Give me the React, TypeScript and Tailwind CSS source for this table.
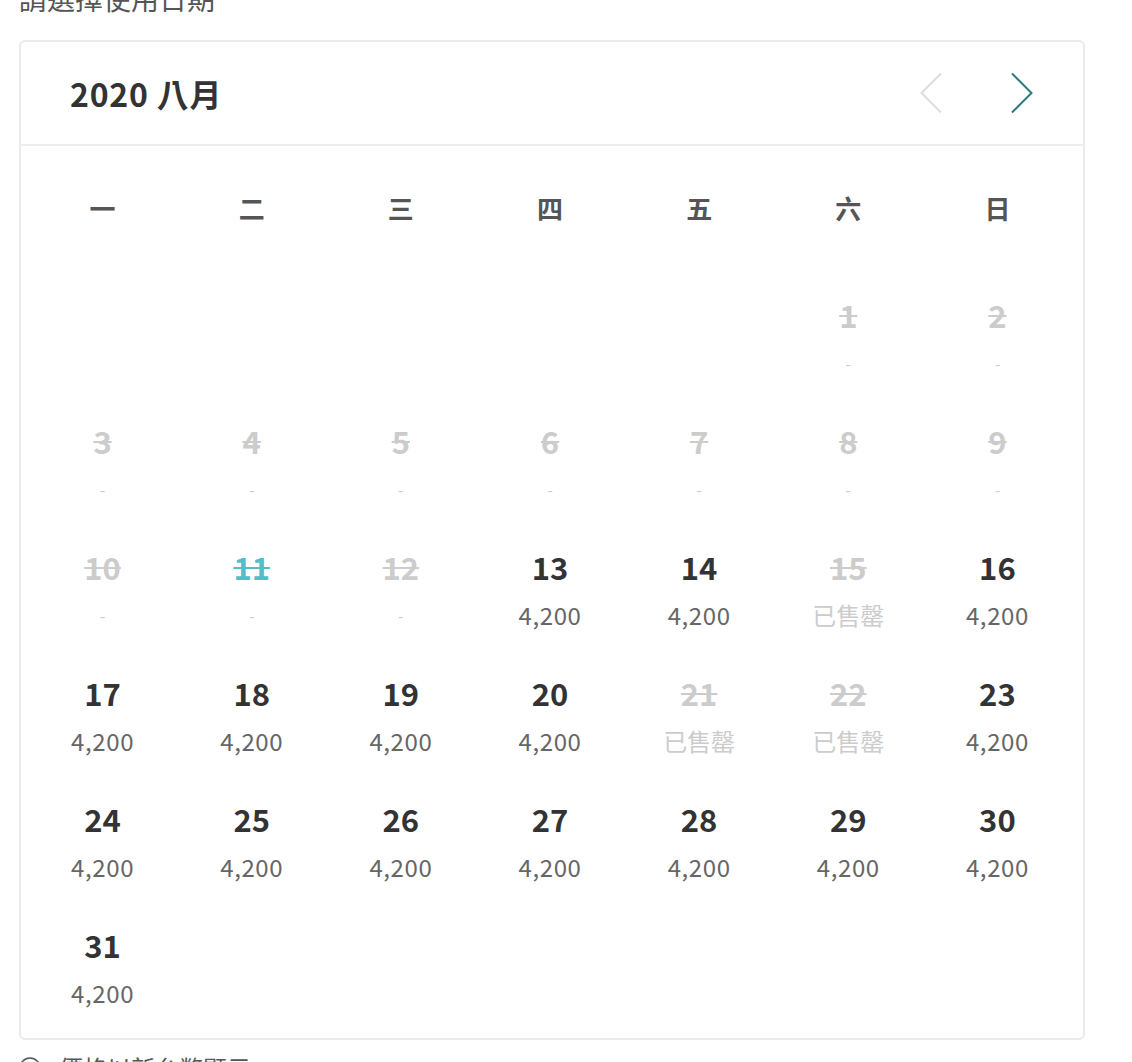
import React from 'react';

// ===================================================================
// CALENDAR DATA
// ===================================================================

type Day = {
  date: number;
  status: 'past' | 'today' | 'open' | 'soldout';
  price?: string;
};

const WEEKDAYS = ['一', '二', '三', '四', '五', '六', '日'];

const soldOut = [15, 21, 22];

const days: (Day | null)[] = [
  ...Array(5).fill(null),
  ...Array.from({ length: 31 }, (_, i) => {
    const date = i + 1;
    if (date === 11) return { date, status: 'today' } as Day;
    if (date < 13) return { date, status: 'past' } as Day;
    if (soldOut.includes(date)) return { date, status: 'soldout' } as Day;
    return { date, status: 'open', price: '4,200' } as Day;
  }),
];

const FONT = { fontFamily: '"Noto Sans CJK TC", "Noto Sans", sans-serif' };

// ===================================================================
// DAY CELL
// ===================================================================

const DayCell: React.FC<{ day: Day | null }> = ({ day }) => {
  if (!day) return <div className="h-[84px]" />;

  const numberClass =
    day.status === 'open'
      ? 'text-[#333333]'
      : day.status === 'today'
      ? 'text-[#4fbfca] line-through decoration-2'
      : 'text-[#cccccc] line-through decoration-2';

  return (
    <div className="flex flex-col items-center h-[84px]">
      <div className={`text-[31px] font-bold leading-[40px] ${numberClass}`}>{day.date}</div>
      {day.status === 'open' && (
        <div className="mt-[12px] text-[24px] leading-[32px] tracking-[0.6px] text-[#666666]">{day.price}</div>
      )}
      {day.status === 'soldout' && (
        <div className="mt-[12px] text-[24px] leading-[32px] text-[#cccccc]">已售罄</div>
      )}
      {(day.status === 'past' || day.status === 'today') && (
        <div className="mt-[12px] text-[16px] leading-[32px] text-[#cccccc]">-</div>
      )}
    </div>
  );
};

// ===================================================================
// APP
// ===================================================================

export default function App() {
  return (
    <div className="w-[1132px] h-[1062px] overflow-hidden bg-white pl-[19px] pr-[47px]" style={FONT}>
      {/* page title (cut at top) */}
      <div className="-mt-[22px] text-[28px] leading-[40px] text-[#555555]">請選擇使用日期</div>

      {/* calendar card */}
      <div className="mt-[22px] border-2 border-[#ebebeb] rounded-[6px]">
        {/* header */}
        <div className="h-[104px] flex items-center justify-between pl-[49px] pr-[49px] border-b-2 border-[#eeeeee]">
          <div className="text-[32px] font-bold text-[#333333] tracking-[0.8px]">2020 八月</div>
          <div className="flex items-center gap-[67px]">
            <svg width="24" height="42" viewBox="0 0 24 42" fill="none">
              <path d="M22 1.5 L2.5 21 L22 40.5" stroke="#dddddd" strokeWidth="2" />
            </svg>
            <svg width="24" height="42" viewBox="0 0 24 42" fill="none">
              <path d="M2 1.5 L21.5 21 L2 40.5" stroke="#2b7d7b" strokeWidth="2" />
            </svg>
          </div>
        </div>

        {/* body */}
        <div className="pt-[42px] pb-[29px] pl-[7px] pr-[11px]">
          <div className="grid grid-cols-7 mb-[67px]">
            {WEEKDAYS.map((w) => (
              <div key={w} className="text-center text-[26px] font-bold leading-[40px] text-[#555555]">
                {w}
              </div>
            ))}
          </div>
          <div className="grid grid-cols-7 gap-y-[42px]">
            {days.map((d, i) => (
              <DayCell key={i} day={d} />
            ))}
          </div>
        </div>
      </div>

      {/* note (cut at bottom) */}
      <div className="mt-[12px] flex items-center gap-[18px] text-[24px] leading-[32px] text-[#555555]">
        <svg width="22" height="22" viewBox="0 0 22 22" fill="none">
          <circle cx="11" cy="11" r="10" stroke="#555555" strokeWidth="1.5" />
        </svg>
        <span>價格以新台幣顯示</span>
      </div>
    </div>
  );
}
